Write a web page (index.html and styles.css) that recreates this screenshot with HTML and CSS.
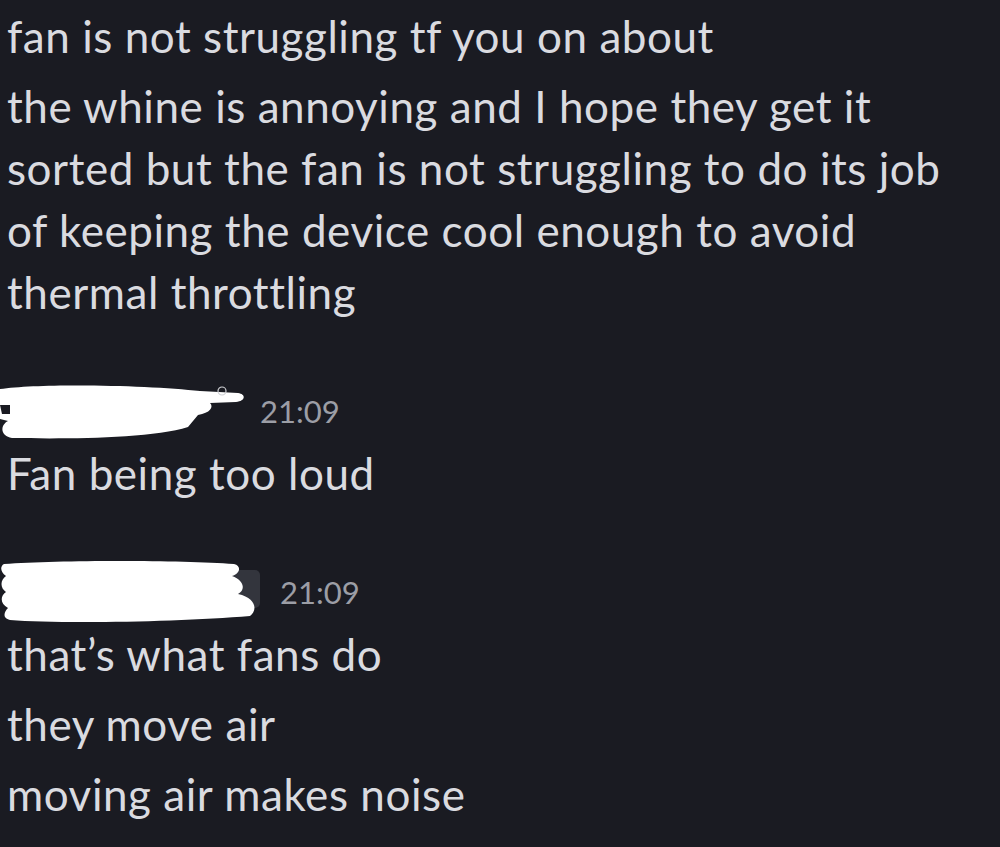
FILE: index.html
```html
<!DOCTYPE html>
<html lang="en">
<head>
  <meta charset="UTF-8" />
  <title>Chat</title>
  <link rel="stylesheet" href="styles.css">
</head>
<body>
  <div class="chat">
    <div class="group">
      <div class="msg">fan is not struggling tf you on about</div>
      <div class="msg">the whine is annoying and I hope they get it<br>sorted but the fan is not struggling to do its job<br>of keeping the device cool enough to avoid<br>thermal throttling</div>
    </div>

    <div class="group">
      <div class="head">
        <svg class="redact" width="250" height="60" viewBox="0 0 250 60">
          <path d="M0 8 C40 2 150 4 200 10 L238 12 C246 13 246 20 236 21 L210 22 C214 26 210 32 198 34 L188 46 C150 58 60 58 12 57 C0 55 0 44 8 40 L0 38 Z" fill="#fff"/>
          <path d="M0 24 L10 24 L10 33 L2 33 Z" fill="#1a1b22"/>
          <circle cx="222" cy="10" r="4" fill="none" stroke="#cfd0d4" stroke-width="1.2"/>
        </svg>
        <span class="time">21:09</span>
      </div>
      <div class="msg">Fan being too loud</div>
    </div>

    <div class="group">
      <div class="head">
        <svg class="redact" width="270" height="64" viewBox="0 0 270 64">
          <rect x="228" y="10" width="32" height="38" rx="5" fill="#33353d"/>
          <path d="M4 4 C60 0 180 0 234 4 C242 6 240 14 232 16 C244 20 246 30 238 34 C256 38 258 50 250 56 C180 62 60 64 10 60 C2 58 4 52 8 48 C0 44 0 36 6 32 C0 28 0 20 6 16 C0 12 0 6 4 4 Z" fill="#fff"/>
        </svg>
        <span class="time">21:09</span>
      </div>
      <div class="msg">that’s what fans do</div>
      <div class="msg">they move air</div>
      <div class="msg">moving air makes noise</div>
    </div>
  </div>
</body>
</html>
```

FILE: styles.css
```css
body {
  margin: 0;
  background: #1a1b22;
  color: #dadbe0;
  font-family: 'Lato', sans-serif;
}

.chat {
  padding: 5px 0 0 7px;
}

.group {
  margin-bottom: 57px;
}

.msg {
  font-size: 44px;
  letter-spacing: 0.55px;
  font-variant-ligatures: none;
  line-height: 62px;
  margin-bottom: 8px;
}

.head {
  display: flex;
  align-items: center;
  gap: 10px;
  height: 62px;
  margin-left: -7px;
}

.time {
  font-size: 31px;
  color: #9c9ea6;
}
```
